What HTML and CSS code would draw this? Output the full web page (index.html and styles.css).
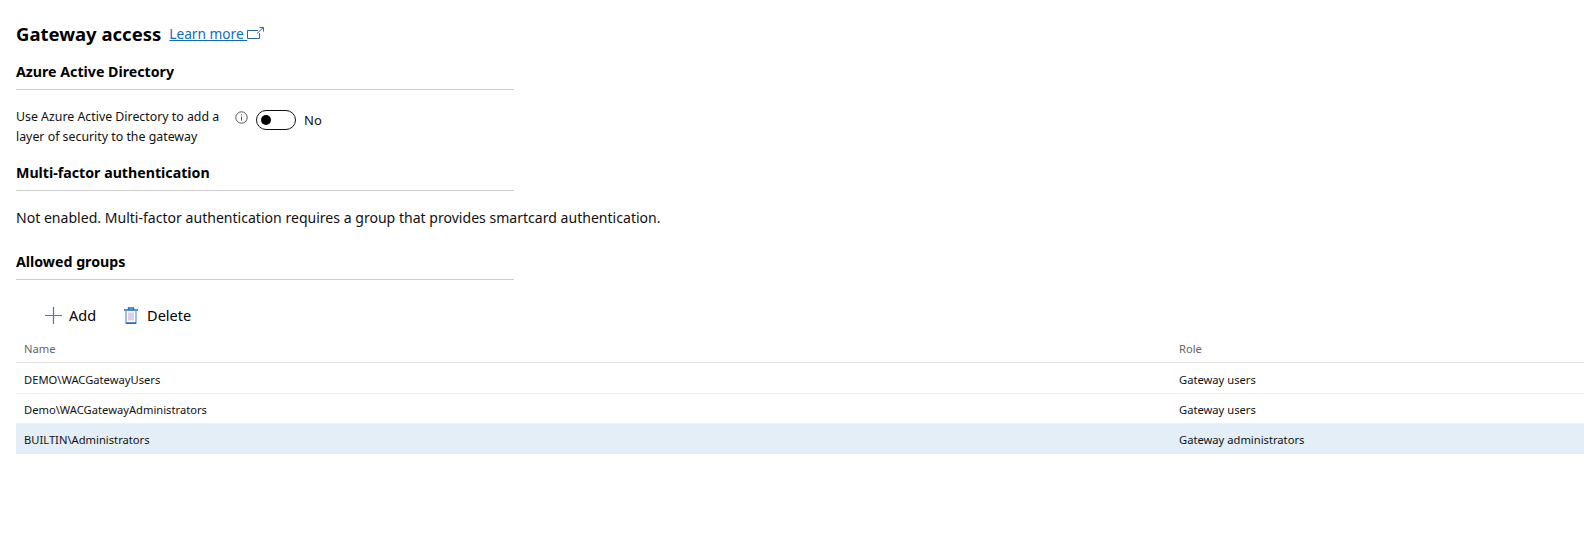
FILE: index.html
```html
<!DOCTYPE html>
<html lang="en">
<head>
<meta charset="UTF-8">
<title>Gateway access</title>
<link rel="stylesheet" href="styles.css">
</head>
<body>

<div class="title-row">
    <h1>Gateway access</h1>
    <a class="learn" href="#">Learn more
        <svg width="17" height="12" viewBox="0 0 17 12" fill="none" stroke="#2f5fb5" stroke-width="1"><path d="M11 3.5H.5v8h12V6"/><path d="M10 6.5 16 .8M12.5.5h4v4"/></svg>
    </a>
</div>

<h2>Azure Active Directory</h2>
<div class="aad-row">
    <p class="aad-label">Use Azure Active Directory to add a layer of security to the gateway</p>
    <svg class="info" width="13" height="13" viewBox="0 0 13 13" fill="none" stroke="#555"><circle cx="6.5" cy="6.5" r="5.7"/><path d="M6.5 5.6v4M6.5 3.2v1.2"/></svg>
    <span class="toggle"><span class="knob"></span></span>
    <span class="toggle-text">No</span>
</div>

<h2>Multi-factor authentication</h2>
<p class="mfa">Not enabled. Multi-factor authentication requires a group that provides smartcard authentication.</p>

<h2 class="groups">Allowed groups</h2>

<div class="toolbar">
    <button class="add">
        <svg width="17" height="17" viewBox="0 0 17 17" stroke="#4a76c0" stroke-width="1.2"><path d="M8.5 0v17M0 8.5h17"/></svg>
        Add
    </button>
    <button class="del">
        <svg width="14" height="17" viewBox="0 0 14 17" fill="none"><path d="M0 3h14M4.5 3V1h5v2" stroke="#1b6ec2" stroke-width="1.4"/><path d="M2 3v13h10V3" stroke="#6fa8e0" stroke-width="1.4"/><path d="M2 16.2h10" stroke="#1b5fb0" stroke-width="1.4"/><path d="M5 5.5v8M7 5.5v8M9 5.5v8" stroke="#c79ac4"/></svg>
        Delete
    </button>
</div>

<table>
    <thead>
        <tr><th class="col-name">Name</th><th>Role</th></tr>
    </thead>
    <tbody>
        <tr><td>DEMO\WACGatewayUsers</td><td>Gateway users</td></tr>
        <tr><td>Demo\WACGatewayAdministrators</td><td>Gateway users</td></tr>
        <tr class="selected"><td>BUILTIN\Administrators</td><td>Gateway administrators</td></tr>
    </tbody>
</table>

</body>
</html>
```

FILE: styles.css
```css
*{
    margin:0;
    padding:0;
    box-sizing:border-box;
}

body{
    background:white;
    color:#111;
    font-family:"Noto Sans",Arial,sans-serif;
    padding:19px 0 0 16px;
    height:550px;
    overflow:hidden;
}

.title-row{
    display:flex;
    align-items:center;
    gap:8px;
    height:28px;
}

h1{
    font-size:18.5px;
    font-weight:700;
    color:#000;
}

.learn{
    color:#0f6cbd;
    font-size:13.7px;
}

h2{
    width:498px;
    font-size:14.2px;
    font-weight:700;
    height:33px;
    padding-top:5px;
    border-bottom:1px solid #ccc;
    margin-top:10px;
    color:#000;
}

.groups{
    height:34px;
    padding-top:6px;
}

.aad-row{
    display:flex;
    align-items:flex-start;
    padding-top:17px;
    height:58px;
}

.aad-label{
    width:219px;
    font-size:12.35px;
    line-height:20px;
}

.info{
    margin-top:4px;
}

.toggle{
    width:40px;
    height:20px;
    border:1.3px solid #111;
    border-radius:10px;
    margin:3px 0 0 8px;
    display:flex;
    align-items:center;
    padding-left:4px;
}

.knob{
    width:10px;
    height:10px;
    border-radius:50%;
    background:#000;
}

.toggle-text{
    font-size:13px;
    margin:4px 0 0 8px;
}

.mfa{
    font-size:14.07px;
    margin-top:17px;
    height:28px;
}

.toolbar{
    display:flex;
    gap:28px;
    padding:23px 0 0 29px;
    height:53px;
}

button{
    display:flex;
    align-items:center;
    gap:7px;
    border:none;
    background:none;
    font-family:inherit;
    font-size:14.5px;
    color:#000;
    height:24px;
}

.del{
    gap:9px;
}

table{
    width:1568px;
    border-collapse:collapse;
    font-size:11.2px;
}

th{
    font-weight:400;
    color:#666;
    text-align:left;
    padding:2px 8px 0;
    height:29px;
    border-bottom:1px solid #e4e4e4;
}

.col-name{
    width:1155px;
}

td{
    padding:3px 8px 0;
    height:30px;
    border-bottom:1px solid #f2f2f2;
}

tbody tr:first-child td{
    height:31px;
    padding-top:4px;
}

.selected td{
    background:#e4eef7;
    border-bottom:none;
    height:31px;
    padding-top:1px;
}
```
